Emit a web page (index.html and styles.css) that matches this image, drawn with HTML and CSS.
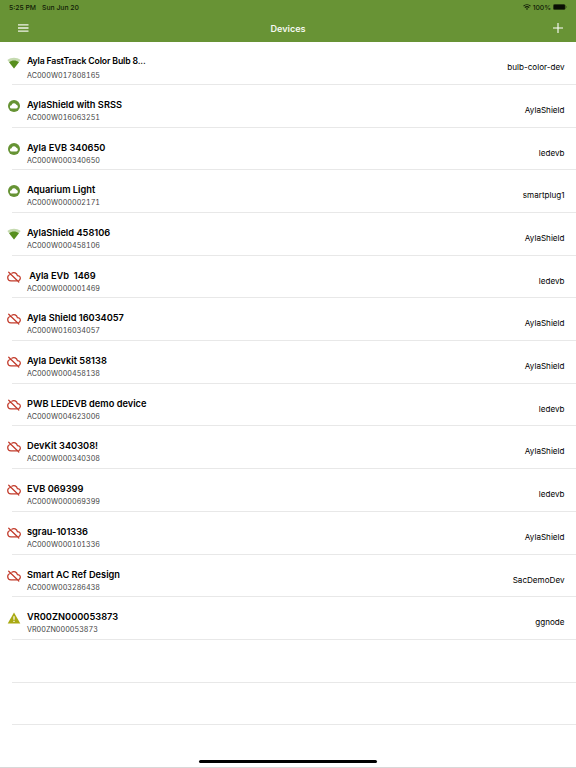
FILE: index.html
```
<!DOCTYPE html>
<html lang="en">
  <head>
    <meta charset="UTF-8">
    <meta name="viewport" content="width=device-width, initial-scale=1.0">
    <title>Devices</title>
    <link rel="stylesheet" href="styles.css">
  </head>

  <body>
    <!-- Shared icons -->
    <svg class="icon-defs">
      <symbol id="icon-wifi" viewBox="0 0 14 12">
        <path fill="#c5dab0" d="M0.4 3.1C4.2-.1 9.8-.1 13.6 3.1L7 11.6Z"/>
        <path fill="#578f1e" d="M2.1 5.3C5 3 9 3 11.9 5.3L7 11.6Z"/>
      </symbol>
      <symbol id="icon-cloud" viewBox="0 0 12 12">
        <circle cx="6" cy="6" r="6" fill="#669334"/>
        <path fill="#fff" d="M3.7 8.6a1.7 1.7 0 0 1-.2-3.4 2.6 2.6 0 0 1 4.9-.4 1.95 1.95 0 0 1-.1 3.8Z"/>
      </symbol>
      <symbol id="icon-offline" viewBox="0 0 14 12">
        <g fill="none" stroke="#c23b2b" stroke-width="1.25" stroke-linecap="round" stroke-linejoin="round">
          <path d="M1.7 1.2L11.8 11"/>
          <path d="M4.8 2.2C7 .7 9.9 2 10.4 4.6C12.3 4.6 13.4 5.9 13.3 7.4C13.2 8.5 12.6 9.2 11.8 9.6"/>
          <path d="M3.4 3.5C1.7 3.8.7 5.1.7 6.7C.8 8.6 2.2 9.8 3.9 9.8H9.8"/>
        </g>
      </symbol>
      <symbol id="icon-warning" viewBox="0 0 13 12">
        <path fill="#a9a912" d="M6.5.4L12.8 11.6H.2Z"/>
        <path fill="#fff" d="M5.9 4.3h1.2v3.4H5.9zM5.9 8.7h1.2v1.2H5.9z"/>
      </symbol>
    </svg>

    <header class="header">
      <div class="status-bar">
        <span class="time">5:25 PM</span>
        <span class="date">Sun Jun 20</span>
        <svg class="status-wifi" viewBox="0 0 8 6">
          <g fill="none" stroke="#111b07" stroke-width="1.1">
            <path d="M.5 2.2C2.5.3 5.5.3 7.5 2.2"/>
            <path d="M1.8 3.6C3.1 2.5 4.9 2.5 6.2 3.6"/>
          </g>
          <path fill="#111b07" d="M2.9 4.7Q4 3.9 5.1 4.7L4 5.9Z"/>
        </svg>
        <span class="percent">100%</span>
        <svg class="battery" viewBox="0 0 14 6">
          <rect x=".25" y=".25" width="12" height="5.5" rx="1.5" fill="#0a0f04" stroke="#3c571e" stroke-width=".5"/>
          <path fill="#3c571e" d="M12.9 2q.8.2.8 1t-.8 1z"/>
        </svg>
      </div>
      <nav class="nav-bar">
        <svg class="menu-btn" viewBox="0 0 11 8">
          <path stroke="#eef3e8" stroke-width="1.3" d="M0 .9h10.5M0 4h10.5M0 7.1h10.5"/>
        </svg>
        <h1 class="title">Devices</h1>
        <svg class="add-btn" viewBox="0 0 10 10">
          <path stroke="#fff" stroke-width="1.1" d="M0 5h10M5 0v10"/>
        </svg>
      </nav>
    </header>

    <ul class="device-list">
      <li class="device">
        <svg class="icon"><use href="#icon-wifi"/></svg>
        <div class="info"><div class="name name-cut">Ayla FastTrack Color Bulb 8...</div><div class="dsn">AC000W017808165</div></div>
        <div class="model">bulb-color-dev</div>
      </li>
      <li class="device">
        <svg class="icon"><use href="#icon-cloud"/></svg>
        <div class="info"><div class="name">AylaShield with SRSS</div><div class="dsn">AC000W016063251</div></div>
        <div class="model">AylaShield</div>
      </li>
      <li class="device">
        <svg class="icon"><use href="#icon-cloud"/></svg>
        <div class="info"><div class="name">Ayla EVB 340650</div><div class="dsn">AC000W000340650</div></div>
        <div class="model">ledevb</div>
      </li>
      <li class="device">
        <svg class="icon"><use href="#icon-cloud"/></svg>
        <div class="info"><div class="name">Aquarium Light</div><div class="dsn">AC000W000002171</div></div>
        <div class="model">smartplug1</div>
      </li>
      <li class="device">
        <svg class="icon"><use href="#icon-wifi"/></svg>
        <div class="info"><div class="name">AylaShield 458106</div><div class="dsn">AC000W000458106</div></div>
        <div class="model">AylaShield</div>
      </li>
      <li class="device">
        <svg class="icon"><use href="#icon-offline"/></svg>
        <div class="info"><div class="name"> Ayla EVb  1469</div><div class="dsn">AC000W000001469</div></div>
        <div class="model">ledevb</div>
      </li>
      <li class="device">
        <svg class="icon"><use href="#icon-offline"/></svg>
        <div class="info"><div class="name">Ayla Shield 16034057</div><div class="dsn">AC000W016034057</div></div>
        <div class="model">AylaShield</div>
      </li>
      <li class="device">
        <svg class="icon"><use href="#icon-offline"/></svg>
        <div class="info"><div class="name">Ayla Devkit 58138</div><div class="dsn">AC000W000458138</div></div>
        <div class="model">AylaShield</div>
      </li>
      <li class="device">
        <svg class="icon"><use href="#icon-offline"/></svg>
        <div class="info"><div class="name">PWB LEDEVB demo device</div><div class="dsn">AC000W004623006</div></div>
        <div class="model">ledevb</div>
      </li>
      <li class="device">
        <svg class="icon"><use href="#icon-offline"/></svg>
        <div class="info"><div class="name">DevKit 340308!</div><div class="dsn">AC000W000340308</div></div>
        <div class="model">AylaShield</div>
      </li>
      <li class="device">
        <svg class="icon"><use href="#icon-offline"/></svg>
        <div class="info"><div class="name">EVB 069399</div><div class="dsn">AC000W000069399</div></div>
        <div class="model">ledevb</div>
      </li>
      <li class="device">
        <svg class="icon"><use href="#icon-offline"/></svg>
        <div class="info"><div class="name">sgrau-101336</div><div class="dsn">AC000W000101336</div></div>
        <div class="model">AylaShield</div>
      </li>
      <li class="device">
        <svg class="icon"><use href="#icon-offline"/></svg>
        <div class="info"><div class="name">Smart AC Ref Design</div><div class="dsn">AC000W003286438</div></div>
        <div class="model">SacDemoDev</div>
      </li>
      <li class="device">
        <svg class="icon"><use href="#icon-warning"/></svg>
        <div class="info"><div class="name">VR00ZN000053873</div><div class="dsn">VR00ZN000053873</div></div>
        <div class="model">ggnode</div>
      </li>
      <li class="device"></li>
      <li class="device"></li>
      <li class="device"></li>
    </ul>

    <div class="home-indicator"></div>
  </body>
</html>
```

FILE: styles.css
```
* {
  box-sizing: border-box;
  margin: 0;
  padding: 0;
}

body {
  height: 768px;
  overflow: hidden;
  position: relative;
  background: white;
  border-bottom: 1px solid #d8d8d8;
  font-family: Inter, "Liberation Sans", sans-serif;
  color: #000;
}

.icon-defs {
  display: none;
}

.header {
  height: 42px;
  background: #689335;
}

.status-bar {
  display: flex;
  align-items: center;
  height: 14px;
  padding: 0 9px;
  font-size: 6.8px;
  font-weight: 500;
  color: #111b07;
}

.date {
  margin-left: 6px;
}

.status-wifi {
  width: 8px;
  height: 6px;
  margin-left: auto;
}

.percent {
  margin: 0 2px;
}

.battery {
  width: 14px;
  height: 6px;
}

.nav-bar {
  display: grid;
  grid-template-columns: 1fr auto 1fr;
  align-items: center;
  height: 28px;
  padding: 0 13px;
}

.menu-btn {
  width: 11px;
  height: 8px;
  margin-left: 5px;
}

.title {
  font-size: 9.1px;
  font-weight: 600;
  color: #f5f8f1;
}

.add-btn {
  width: 10px;
  height: 10px;
  justify-self: end;
}

.device-list {
  list-style: none;
  padding-top: 0.3px;
}

.device {
  display: flex;
  align-items: flex-start;
  height: 42.69px;
  padding: 13px 11.5px 0 7px;
  background: linear-gradient(#e8e8e8, #e8e8e8) 11.5px 100% / 100% 1px no-repeat;
}

.icon {
  width: 14px;
  height: 12px;
  margin-top: 2px;
}

.info {
  flex: 1;
  padding-left: 6px;
}

.name {
  font-size: 9.25px;
  font-weight: 600;
  line-height: 13px;
  white-space: pre;
}

.name-cut {
  font-size: 8.7px;
  line-height: 13.5px;
  letter-spacing: -0.15px;
}

.dsn {
  font-size: 7.2px;
  line-height: 13px;
  font-variant-numeric: tabular-nums;
  color: #444;
}

.model {
  padding-top: 6px;
  font-size: 8.1px;
  line-height: 13px;
}

.home-indicator {
  position: absolute;
  left: 199px;
  bottom: 4px;
  width: 178px;
  height: 3px;
  border-radius: 2px;
  background: #000;
}
```
